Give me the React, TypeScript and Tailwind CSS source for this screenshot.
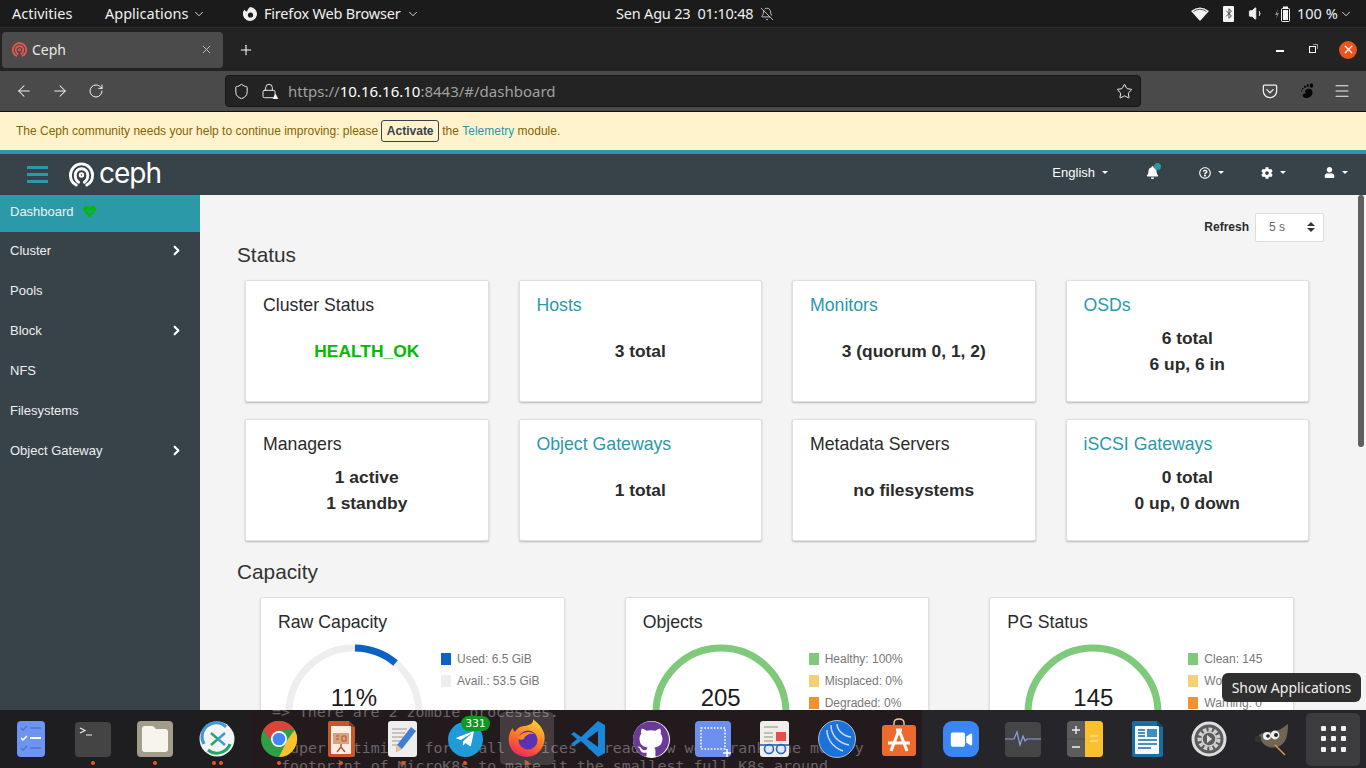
import { ReactNode } from 'react';
import { ArrowLeft, ArrowRight, BellOff, ChevronDown, ChevronRight, Lock, Plus, RotateCw, Shield, Star, Volume1, X, Menu } from 'lucide-react';
import { FaBell, FaCog, FaHeartbeat, FaRegQuestionCircle, FaTelegramPlane, FaUser, FaVideo } from 'react-icons/fa';
import { SiGithub } from 'react-icons/si';

function CephMark({ className, color }: { className: string; color: string }) {
  return (
    <svg viewBox="0 0 26 26" className={className} fill="none" stroke={color} strokeWidth="3" strokeLinecap="round">
      <path d="M7.5 24 C3.5 22 1.5 18 1.5 13.5 A11.5 11.5 0 0 1 24.5 13.5 C24.5 18 22.5 22 18.5 24" />
      <path d="M10 21 C7.5 19.5 6.5 16.5 6.5 13.5 A6.5 6.5 0 0 1 19.5 13.5 C19.5 16.5 18.5 19.5 16 21" />
      <circle cx="13" cy="13.5" r="1.8" strokeWidth="2" />
    </svg>
  );
}

function Caret() {
  return <span className="ml-[7px] h-0 w-0 border-x-[3px] border-t-[3px] border-x-transparent border-t-white" />;
}

function TopBar() {
  return (
    <div className="relative flex h-[28px] items-center whitespace-nowrap border-b border-[#2c2c2c] bg-[#1b1b1b] font-['Noto_Sans',sans-serif] text-[14.5px] text-[#f0f0f0]">
      <span className="ml-3 w-[93px]">Activities</span>
      <span className="w-[84px]">Applications</span>
      <ChevronDown className="ml-[3px] h-[14px] w-[14px]" strokeWidth={1.5} />
      <svg viewBox="0 0 16 16" className="ml-[36px] h-4 w-4" fill="#f0f0f0">
        <path d="M8 1 A7 7 0 1 1 2.5 3.6 C3 5 4 5.6 5 5.4 C5.4 3.6 6.8 2.4 8 1 Z" />
        <circle cx="8.5" cy="9" r="2.6" fill="#1b1b1b" />
      </svg>
      <span className="ml-[6px] w-[137px] tracking-[-0.2px]">Firefox Web Browser</span>
      <ChevronDown className="ml-[5px] h-[14px] w-[14px]" strokeWidth={1.5} />
      <span className="ml-[196px] w-[144px] tracking-[-0.2px]">Sen Agu 23&nbsp; 01:10:48</span>
      <BellOff className="h-[14px] w-[14px]" strokeWidth={1.3} />
      <div className="ml-auto flex items-center pr-[13px]">
        <svg viewBox="0 0 18 14" className="h-[14px] w-[18px]" fill="#f4f4f4">
          <path d="M0 4 Q9 -3 18 4 L9 14 Z" />
          <path d="M2.5 4.5 Q9 0 15.5 4.5" fill="none" stroke="#1b1b1b" strokeWidth="0.7" />
        </svg>
        <span className="ml-[14px] flex h-[16px] w-[11px] items-center justify-center rounded-[1px] bg-[#f4f4f4]">
          <svg viewBox="0 0 10 16" className="h-[13px] w-[8px]" fill="none" stroke="#222" strokeWidth="1">
            <path d="M1.5 4.5 L8 11 L5 14 V2 L8 5 L1.5 11.5" />
          </svg>
        </span>
        <Volume1 className="ml-[14px] h-[17px] w-[17px] fill-[#f0f0f0]" strokeWidth={1.3} />
        <svg viewBox="0 0 20 16" className="ml-[9px] h-[16px] w-[20px]" fill="none">
          <path d="M4 3 L1 9 H3 L2 13 L5 7 H3 Z" fill="#888" />
          <rect x="7.5" y="2.5" width="8" height="13" rx="1" stroke="#f4f4f4" />
          <rect x="9" y="0.5" width="5" height="2" fill="#f4f4f4" />
          <rect x="9" y="4" width="5" height="10" fill="#f4f4f4" />
        </svg>
        <span className="ml-[3px] w-[39px] text-[#e9f2fb]">100 %</span>
        <ChevronDown className="ml-[3px] h-[14px] w-[14px]" strokeWidth={1.5} />
      </div>
    </div>
  );
}

function TabStrip() {
  return (
    <div className="flex h-[43px] items-center bg-[#232323] pl-[2px] font-['Noto_Sans',sans-serif] text-[#e8e8e8]">
      <div className="flex h-[36px] w-[221px] items-center rounded-[4px] bg-[#4b4b4b] pl-[10px] pr-[10px]">
        <CephMark className="h-[15px] w-[15px]" color="#f0564f" />
        <span className="ml-[5px] text-[14px]">Ceph</span>
        <X className="ml-auto h-[13px] w-[13px] text-[#d0d0d0]" strokeWidth={1.5} />
      </div>
      <Plus className="ml-[15px] h-[16px] w-[16px] text-white" strokeWidth={1.6} />
      <div className="ml-auto flex items-center pr-[9px]">
        <span className="mt-[3px] h-[1.5px] w-2 bg-white" />
        <span className="relative ml-[25px] h-[7px] w-[7px] border border-white">
          <span className="absolute -right-[3px] -top-[3px] h-[5px] w-[5px] border-r border-t border-[#999]" />
        </span>
        <span className="ml-[23px] flex h-[18px] w-[18px] items-center justify-center rounded-full bg-[#e95420]">
          <X className="h-[13px] w-[13px] text-white" strokeWidth={2.2} />
        </span>
      </div>
    </div>
  );
}

function NavToolbar() {
  return (
    <div className="flex h-[41px] items-center border-b border-[#111] bg-[#4a4a4a] text-[#f2f2f2]">
      <ArrowLeft className="ml-[15px] h-[18px] w-[18px]" strokeWidth={1.4} />
      <ArrowRight className="ml-[18px] h-[18px] w-[18px]" strokeWidth={1.4} />
      <RotateCw className="ml-[19px] h-[16px] w-[16px]" strokeWidth={1.5} />
      <div className="ml-[121px] flex h-[32px] w-[916px] items-center rounded-[4px] border border-[#161616] bg-[#232323] pl-[7px] pr-[7px] font-['Noto_Sans',sans-serif] text-[15px]">
        <Shield className="h-[17px] w-[17px]" strokeWidth={1.4} />
        <span className="relative ml-[11px]">
          <Lock className="h-[16px] w-[16px]" strokeWidth={1.4} />
          <span className="absolute -bottom-[1px] -right-[3px] text-[9px] leading-none text-white">▲</span>
        </span>
        <span className="ml-[11px] text-[#a0a0a0]">
          https://<span className="text-white">10.16.16.10</span>:8443/#/dashboard
        </span>
        <Star className="ml-auto h-[17px] w-[17px]" strokeWidth={1.4} />
      </div>
      <svg viewBox="0 0 18 18" className="ml-[121px] h-4 w-4" fill="none" stroke="#f2f2f2" strokeWidth="1.4" strokeLinejoin="round" strokeLinecap="round">
        <path d="M2.5 2.5 H15.5 Q16.5 2.5 16.5 4 V9 A7.5 7.5 0 0 1 1.5 9 V4 Q1.5 2.5 2.5 2.5 Z" />
        <path d="M5.5 7.5 L9 11 L12.5 7.5" />
      </svg>
      <svg viewBox="0 0 16 16" className="ml-[20px] h-4 w-4" fill="#050505">
        <path d="M8.5 6.5 C11 5 15 6 14.5 10 C14 14 9 16 6 14.5 C3.5 13 5 9.5 8.5 10.5 C6.5 8.5 6.5 7.5 8.5 6.5 Z" />
        <ellipse cx="13.5" cy="2.5" rx="1.7" ry="2.3" />
        <ellipse cx="9.8" cy="2.5" rx="1.1" ry="1.5" />
        <ellipse cx="7" cy="3.8" rx="0.9" ry="1.2" />
        <ellipse cx="4.8" cy="5.6" rx="0.7" ry="0.9" />
        <ellipse cx="3.6" cy="7.7" rx="0.5" ry="0.7" />
      </svg>
      <Menu className="ml-[19px] h-[18px] w-[18px]" strokeWidth={1.4} />
    </div>
  );
}

function Banner() {
  return (
    <div className="flex h-[38px] items-center bg-[#fff3cd] pl-4 text-[12px] text-[#856404]">
      The Ceph community needs your help to continue improving: please
      <span className="mx-[3px] flex h-[22px] w-[58px] items-center justify-center rounded-[3px] border border-[#374249] font-bold text-[#374249]">
        Activate
      </span>
      the&nbsp;<span className="text-[#2b99a8]">Telemetry</span>&nbsp;module.
    </div>
  );
}

function CephNav() {
  return (
    <div className="flex h-[45px] items-center border-t-4 border-[#2b99a8] bg-[#374249] text-white">
      <div className="ml-[27px] flex w-[21px] flex-col gap-[4px]">
        <span className="h-[3px] bg-[#2b99a8]" />
        <span className="h-[3px] bg-[#2b99a8]" />
        <span className="h-[3px] bg-[#2b99a8]" />
      </div>
      <CephMark className="ml-[21px] h-[25px] w-[25px]" color="#ffffff" />
      <span className="ml-[5px] -mt-[3px] font-['Inter',sans-serif] text-[28px] leading-none tracking-[-1px]">ceph</span>
      <div className="ml-auto flex items-center pb-[4px] pr-[18px] text-[13px]">
        English
        <Caret />
        <span className="relative ml-[38px]">
          <FaBell className="h-[13px] w-[13px]" />
          <span className="absolute -right-[2px] -top-[3px] h-[7px] w-[7px] rounded-full bg-[#2b99a8]" />
        </span>
        <FaRegQuestionCircle className="ml-[40px] h-[12px] w-[12px]" />
        <Caret />
        <FaCog className="ml-[37px] h-[12px] w-[12px]" />
        <Caret />
        <FaUser className="ml-[38px] h-[11px] w-[11px]" />
        <Caret />
      </div>
    </div>
  );
}

function Sidebar() {
  const items = [
    { label: 'Cluster', sub: true },
    { label: 'Pools', sub: false },
    { label: 'Block', sub: true },
    { label: 'NFS', sub: false },
    { label: 'Filesystems', sub: false },
    { label: 'Object Gateway', sub: true },
  ];
  return (
    <aside className="w-[200px] shrink-0 bg-[#374249] text-[13px] text-[#f0f0f0]">
      <div className="flex h-[37px] items-center bg-[#2b99a8] pb-1 pl-[10px]">
        Dashboard
        <FaHeartbeat className="ml-[9px] h-[13px] w-[13px] text-[#00bb00]" />
      </div>
      {items.map((item) => (
        <div key={item.label} className="flex h-10 items-center pb-[3px] pl-[10px] pr-[16px]">
          {item.label}
          {item.sub && <ChevronRight className="ml-auto h-[15px] w-[15px] text-white" strokeWidth={3.4} />}
        </div>
      ))}
    </aside>
  );
}

function StatusCard({ title, link, lines, green }: { title: string; link?: boolean; lines: string[]; green?: boolean }) {
  return (
    <div className="h-[122px] rounded-[2px] border border-[#e0e0e0] bg-white px-[17px] pt-[13px] shadow-[0_1px_2px_rgba(0,0,0,0.25)]">
      <div className={`h-[22px] text-[17.7px] leading-[22px] ${link ? 'text-[#2b99a8]' : 'text-[#2b2b2b]'}`}>{title}</div>
      <div className={`mt-[9px] flex h-[52px] flex-col items-center justify-center text-[17.4px] font-bold leading-[26px] ${green ? 'text-[#00bb00]' : 'text-[#2b2b2b]'}`}>
        {lines.map((line) => (
          <div key={line}>{line}</div>
        ))}
      </div>
    </div>
  );
}

function CapacityCard(props: {
  title: string;
  center: string;
  donutLeft: number;
  legendGap: number;
  ringColor: string;
  arc?: boolean;
  legend: { label: string; color: string }[];
}) {
  const { title, center, donutLeft, legendGap, ringColor, arc, legend } = props;
  return (
    <div className="h-[200px] rounded-[2px] border border-[#e0e0e0] bg-white pl-[17px] pt-[13px] shadow-[0_1px_2px_rgba(0,0,0,0.2)]">
      <div className="h-[22px] text-[17.7px] leading-[22px] text-[#2b2b2b]">{title}</div>
      <div className="mt-[11px] flex">
        <div className="relative h-[138px] w-[138px] shrink-0" style={{ marginLeft: donutLeft }}>
          <svg viewBox="0 0 138 138" className="h-[138px] w-[138px]" fill="none">
            <circle cx="69" cy="69" r="65" stroke={ringColor} strokeWidth="7" />
            {arc && <path d="M70 4 A65 65 0 0 1 110.5 19" stroke="#0b62c4" strokeWidth="7" />}
          </svg>
          <div className="absolute inset-x-0 top-[40px] text-center text-[24px] leading-[28px] text-[#1c1c1c]">{center}</div>
        </div>
        <div className="flex flex-col gap-[10px] pt-[9px] text-[12px] leading-[12px] text-[#777]" style={{ marginLeft: legendGap }}>
          {legend.map((entry) => (
            <div key={entry.label} className="flex items-center">
              <span className="mr-[6px] h-[12px] w-[10px]" style={{ backgroundColor: entry.color }} />
              {entry.label}
            </div>
          ))}
        </div>
      </div>
    </div>
  );
}

function Dashboard() {
  return (
    <main className="relative min-w-0 flex-1 overflow-hidden bg-[#f4f4f4] font-['Liberation_Sans',sans-serif]">
      <div className="flex h-[47px] items-start justify-end pr-[42px] pt-[18px]">
        <span className="mr-[6px] mt-[5px] text-[12px] font-bold text-[#2b2b2b]">Refresh</span>
        <div className="flex h-[29px] w-[69px] items-center justify-between rounded-[2px] border border-[#ddd] bg-white pb-[2px] pl-[13px] pr-[8px] text-[12px] text-[#666]">
          5 s
          <span className="flex flex-col gap-[2px]">
            <span className="h-0 w-0 border-x-[4px] border-b-[4px] border-x-transparent border-b-[#333]" />
            <span className="h-0 w-0 border-x-[4px] border-t-[4px] border-x-transparent border-t-[#333]" />
          </span>
        </div>
      </div>
      <h2 className="ml-[37px] mt-[1px] text-[20.8px] leading-[24px] text-[#333]">Status</h2>
      <div className="ml-[45px] mt-[13px] grid w-[1064px] grid-cols-4 gap-x-[30px] gap-y-[17px]">
        <StatusCard title="Cluster Status" lines={['HEALTH_OK']} green />
        <StatusCard title="Hosts" link lines={['3 total']} />
        <StatusCard title="Monitors" link lines={['3 (quorum 0, 1, 2)']} />
        <StatusCard title="OSDs" link lines={['6 total', '6 up, 6 in']} />
        <StatusCard title="Managers" lines={['1 active', '1 standby']} />
        <StatusCard title="Object Gateways" link lines={['1 total']} />
        <StatusCard title="Metadata Servers" lines={['no filesystems']} />
        <StatusCard title="iSCSI Gateways" link lines={['0 total', '0 up, 0 down']} />
      </div>
      <h2 className="ml-[37px] mt-[19px] text-[20.8px] leading-[24px] text-[#333]">Capacity</h2>
      <div className="ml-[60px] mt-[13px] grid w-[1034px] grid-cols-3 gap-x-[60px]">
        <CapacityCard
          title="Raw Capacity"
          center="11%"
          donutLeft={7}
          legendGap={18}
          ringColor="#eeeeee"
          arc
          legend={[
            { label: 'Used: 6.5 GiB', color: '#0b62c4' },
            { label: 'Avail.: 53.5 GiB', color: '#eeeeee' },
          ]}
        />
        <CapacityCard
          title="Objects"
          center="205"
          donutLeft={9}
          legendGap={19}
          ringColor="#7ec97a"
          legend={[
            { label: 'Healthy: 100%', color: '#7ec97a' },
            { label: 'Misplaced: 0%', color: '#f6d173' },
            { label: 'Degraded: 0%', color: '#f0932f' },
          ]}
        />
        <CapacityCard
          title="PG Status"
          center="145"
          donutLeft={17}
          legendGap={26}
          ringColor="#7ec97a"
          legend={[
            { label: 'Clean: 145', color: '#7ec97a' },
            { label: 'Working: 0', color: '#f6d173' },
            { label: 'Warning: 0', color: '#f0932f' },
          ]}
        />
      </div>
      <div className="absolute right-[2px] top-0 h-[252px] w-[6px] rounded-full bg-[#5f5f5f]" />
    </main>
  );
}

/* dock icons, all on a 48 box */
const Tile = ({ children }: { children: ReactNode }) => (
  <svg viewBox="0 0 48 48" className="h-12 w-12">
    {children}
  </svg>
);

const dockIcons: { key: string; dots?: number; active?: boolean; icon: ReactNode }[] = [
  {
    key: 'tasks',
    icon: (
      <Tile>
        <rect x="10" y="6" width="28" height="36" rx="4" fill="#6d94f0" />
        <path d="M14 13 l2 2 l4 -4 M14 33 l2 2 l4 -4" stroke="#4f74d0" strokeWidth="1.5" fill="none" />
        <path d="M14 23 l2 2 l4 -4" stroke="#fff" strokeWidth="1.5" fill="none" />
        <path d="M23 13 h11 M23 33 h11" stroke="#4f74d0" strokeWidth="1.5" />
        <path d="M23 23 h11" stroke="#fff" strokeWidth="2" />
      </Tile>
    ),
  },
  {
    key: 'terminal',
    dots: 1,
    icon: (
      <Tile>
        <rect x="6" y="7" width="36" height="35" rx="4" fill="#444444" />
        <path d="M11 13 l5 2.5 l-5 2.5 M17 20 h6" stroke="#eee" strokeWidth="1.2" fill="none" />
      </Tile>
    ),
  },
  {
    key: 'files',
    dots: 1,
    icon: (
      <Tile>
        <rect x="6" y="6" width="36" height="36" rx="4" fill="#a39c8b" />
        <path d="M11 14 q0 -3 3 -3 h8 l3 3 h9 q3 0 3 3 v17 q0 3 -3 3 h-20 q-3 0 -3 -3 Z" fill="#f7f4ee" />
      </Tile>
    ),
  },
  {
    key: 'remmina',
    dots: 2,
    icon: (
      <Tile>
        <circle cx="24" cy="24" r="17.5" fill="#f4f4f4" />
        <path d="M33 12 A14 14 0 0 0 11 29" stroke="#3d97dd" strokeWidth="3" fill="none" />
        <path d="M15 35 A14 14 0 0 0 37 29" stroke="#1fa866" strokeWidth="3" fill="none" />
        <path d="M18 18 l7 6 l-7 6" stroke="#1fa866" strokeWidth="2.4" fill="none" />
        <path d="M32 18 l-7 6 l7 6" stroke="#3d97dd" strokeWidth="2.4" fill="none" />
      </Tile>
    ),
  },
  {
    key: 'chrome',
    dots: 1,
    icon: (
      <Tile>
        <circle cx="24" cy="24" r="18" fill="#2f9e44" />
        <path d="M39.6 15 A18 18 0 0 1 24 42 L33 24 Z" fill="#fbc02d" />
        <path d="M8.4 15 A18 18 0 0 1 39.6 15 H24 L15 24 Z" fill="#db4437" />
        <circle cx="24" cy="24" r="8" fill="#fff" />
        <circle cx="24" cy="24" r="6.3" fill="#4285f4" />
      </Tile>
    ),
  },
  {
    key: 'impress',
    dots: 1,
    icon: (
      <Tile>
        <path d="M11 8 q0 -2 2 -2 h19 l6 6 v28 q0 2 -2 2 h-23 q-2 0 -2 -2 Z" fill="#c8572a" />
        <path d="M32 6 l6 6 h-6 Z" fill="#8f3d1c" />
        <rect x="14" y="11" width="20" height="28" rx="1" fill="#fbeee6" />
        <rect x="16" y="18" width="16" height="11" fill="#dda07e" />
        <path d="M19 21 h3 M19 24 h3 M25 21 h4 v5 h-4 Z" stroke="#b5552b" strokeWidth="1" fill="none" />
        <path d="M24 29 v3 M24 32 l-4 5 M24 32 l4 5" stroke="#b5552b" strokeWidth="1.5" />
      </Tile>
    ),
  },
  {
    key: 'editor',
    dots: 1,
    icon: (
      <Tile>
        <rect x="9" y="6" width="29" height="36" rx="3" fill="#eeeeee" />
        <path d="M13 14 h15 M13 18 h13 M13 22 h11 M13 26 h9 M13 30 h7" stroke="#b9b5a9" strokeWidth="1.4" />
        <path d="M32 12 l5 4 l-14 18 l-6 3 l1 -7 Z" fill="#3f7fd8" />
        <path d="M18 30 l5 4 l-6 3 Z" fill="#f0c48a" />
      </Tile>
    ),
  },
  {
    key: 'telegram',
    dots: 1,
    icon: (
      <div className="flex h-[35px] w-[35px] items-center justify-center rounded-full bg-[#1f9bd8]">
        <FaTelegramPlane className="h-[20px] w-[20px] text-white" />
      </div>
    ),
  },
  {
    key: 'firefox',
    dots: 1,
    active: true,
    icon: (
      <svg viewBox="0 0 48 48" className="h-12 w-12">
        <defs>
          <linearGradient id="fx" x1="0.7" y1="0" x2="0.3" y2="1">
            <stop offset="0" stopColor="#ffd23a" />
            <stop offset="0.5" stopColor="#ff7a1f" />
            <stop offset="1" stopColor="#f0245f" />
          </linearGradient>
        </defs>
        <path d="M30 4 C34 8 38 10 41 18 C44 30 36 42 24 42 C12 42 4 33 6 21 C7 17 8 15 10 13 C10 15 11 16 12 17 C14 13 18 11 22 11 C26 10 31 9 30 4 Z" fill="url(#fx)" />
        <circle cx="25" cy="25" r="9.5" fill="#5a32b8" />
        <path d="M15 23 C18 17 27 15 32 19 C27 18 22 20 21 24 C18 25 16 25 15 23 Z" fill="#ff8a24" />
      </svg>
    ),
  },
  {
    key: 'vscode',
    icon: (
      <Tile>
        <path fillRule="evenodd" d="M33 6 L16 22 L9 17 L6 19 L12 24 L6 29 L9 31 L16 26 L33 42 L40 38 V10 Z M33 16 V32 L22 24 Z" fill="#1a87d8" />
      </Tile>
    ),
  },
  {
    key: 'github',
    icon: (
      <div className="flex h-[37px] w-[37px] items-center justify-center rounded-full bg-white">
        <SiGithub className="h-[36px] w-[36px] text-[#6a3a94]" />
      </div>
    ),
  },
  {
    key: 'shot',
    icon: (
      <Tile>
        <rect x="6" y="6" width="36" height="36" rx="4" fill="#6d8ff0" />
        <rect x="12" y="13" width="24" height="21" fill="none" stroke="#fff" strokeWidth="1.6" strokeDasharray="1.6 1.6" />
        <path d="M38 34 v8 M34 38 h8" stroke="#fff" strokeWidth="1.6" />
      </Tile>
    ),
  },
  {
    key: 'reader',
    icon: (
      <Tile>
        <rect x="9" y="6" width="29" height="36" rx="3" fill="#efeeea" />
        <path d="M13 12 h14 M13 18 h9 M13 22 h9 M13 26 h9" stroke="#b4ad98" strokeWidth="1.6" />
        <rect x="25" y="17" width="10" height="9" fill="#e2504c" />
        <circle cx="18" cy="34" r="4.5" fill="#dfe8f5" stroke="#2a63b8" strokeWidth="1.6" />
        <circle cx="30" cy="34" r="4.5" fill="#dfe8f5" stroke="#2a63b8" strokeWidth="1.6" />
        <path d="M9 30 h29" stroke="#2a63b8" strokeWidth="1.6" />
      </Tile>
    ),
  },
  {
    key: 'winbox',
    icon: (
      <Tile>
        <circle cx="24" cy="24" r="18.5" fill="#1a72dc" stroke="#d8d8d8" strokeWidth="0.8" />
        <path d="M18 10 C18 20 25 28 36 30 M24 9 C24 15 30 21 38 22 M14 15 C14 25 21 33 30 36" stroke="#cfd8e6" strokeWidth="1.5" fill="none" />
      </Tile>
    ),
  },
  {
    key: 'store',
    icon: (
      <Tile>
        <path d="M19 11 V8 q0 -4 5 -4 q5 0 5 4 v3" stroke="#e8c98e" strokeWidth="1.5" fill="none" />
        <rect x="7" y="10" width="34" height="31" rx="3" fill="#ee6a2c" />
        <path d="M24 15 L16 36 M24 15 L32 36 M13 28 H35" stroke="#fff" strokeWidth="3" />
        <path d="M21 15 h6" stroke="#fff" strokeWidth="3" />
      </Tile>
    ),
  },
  {
    key: 'zoom',
    icon: (
      <div className="flex h-[36px] w-[36px] items-center justify-center rounded-[9px] bg-[#3a86f5]">
        <FaVideo className="h-[19px] w-[23px] text-white" />
      </div>
    ),
  },
  {
    key: 'monitor',
    icon: (
      <Tile>
        <rect x="6" y="7" width="36" height="35" rx="4" fill="#454545" />
        <path d="M6 24 h9 l3 -7 l3 13 l3 -9 l2 5 l2 -2 h14" stroke="#8d9fe6" strokeWidth="1.2" fill="none" />
      </Tile>
    ),
  },
  {
    key: 'calc',
    icon: (
      <Tile>
        <rect x="6" y="6" width="36" height="36" rx="4" fill="#5c5c5c" />
        <path d="M24 6 h14 q4 0 4 4 v28 q0 4 -4 4 h-14 Z" fill="#fbc02d" />
        <path d="M6 24 h18" stroke="#444" strokeWidth="0.8" />
        <path d="M11 15 h8 M15 11 v8 M11 32 h8" stroke="#eee" strokeWidth="1.4" />
        <path d="M29 21 h8 M29 26 h8" stroke="#fbe28c" strokeWidth="1.6" />
      </Tile>
    ),
  },
  {
    key: 'writer',
    icon: (
      <Tile>
        <path d="M9 8 q0 -2 2 -2 h23 l6 6 v28 q0 2 -2 2 h-27 q-2 0 -2 -2 Z" fill="#1a6ea3" />
        <path d="M34 6 l6 6 h-6 Z" fill="#0e4a70" />
        <rect x="12" y="11" width="24" height="28" rx="1" fill="#f3f8fb" />
        <rect x="24" y="14" width="10" height="8" fill="#3e8ec4" />
        <path d="M15 15 h7 M15 18 h7 M15 21 h7 M15 25 h19 M15 29 h19 M15 33 h13" stroke="#1a6ea3" strokeWidth="1.5" />
      </Tile>
    ),
  },
  {
    key: 'settings',
    icon: (
      <Tile>
        <circle cx="24" cy="24" r="16" fill="#5c5c5c" stroke="#dedede" strokeWidth="3" />
        <circle cx="24" cy="24" r="9.5" fill="none" stroke="#d0d0d0" strokeWidth="4" strokeDasharray="3.5 2" />
        <circle cx="24" cy="24" r="7" fill="none" stroke="#d0d0d0" strokeWidth="1.6" />
        <path d="M22 20 l5 4 l-5 4 Z" fill="#e0e0e0" />
      </Tile>
    ),
  },
  {
    key: 'gimp',
    icon: (
      <Tile>
        <path d="M12 20 C18 16 26 18 34 14 L41 9 C41 20 39 30 30 32 C22 34 14 30 12 20 Z" fill="#6f6656" />
        <circle cx="20" cy="21" r="4" fill="#eee" />
        <circle cx="28" cy="20" r="4.4" fill="#eee" />
        <circle cx="21" cy="21" r="1.8" fill="#222" />
        <circle cx="29" cy="20" r="2" fill="#222" />
        <circle cx="11" cy="24" r="3.2" fill="#333" />
        <path d="M28 30 L38 40" stroke="#d8994a" strokeWidth="1.5" />
        <path d="M38 40 l2 2" stroke="#222" strokeWidth="1.5" />
      </Tile>
    ),
  },
];

function Dock() {
  return (
    <div className="absolute inset-x-0 bottom-0 h-[58px] overflow-hidden bg-[#26262a]">
      <div className="absolute inset-y-0 left-0 w-[250px] bg-[#1e1e21]" />
      <div className="absolute inset-y-0 left-[250px] w-[672px] overflow-hidden whitespace-pre bg-[#231a1e] pl-[22px] font-['DejaVu_Sans_Mono',monospace] text-[14.9px] leading-[18px] text-[#6b6468]">
        <div className="-mt-[7px]">=&gt; There are 2 zombie processes.</div>
        <div className="h-[18px]" />
        <div className="pl-[9px]">Super-optimized for small devices - read how we shrank the memory</div>
        <div className="pl-[9px]">footprint of MicroK8s to make it the smallest full K8s around</div>
      </div>
      <div className="relative flex h-full">
        {dockIcons.map((item) => (
          <div key={item.key} className="relative flex h-full w-[62px] shrink-0 items-center justify-center">
            {item.active && <div className="absolute left-[4px] top-[2px] h-[53px] w-[54px] rounded-[5px] bg-white/15" />}
            <div className="relative flex h-[48px] w-[48px] items-center justify-center">{item.icon}</div>
            {item.key === 'telegram' && (
              <span className="absolute left-[27px] top-[6px] flex h-[15px] w-[29px] items-center justify-center rounded-full bg-[#0d9a23] font-['DejaVu_Sans_Mono',monospace] text-[11px] leading-none text-white">
                331
              </span>
            )}
            {item.dots && (
              <div className="absolute bottom-[3px] flex gap-[3px]">
                {Array.from({ length: item.dots }).map((_, i) => (
                  <span key={i} className="h-[4px] w-[4px] rounded-full bg-[#e95420]" />
                ))}
              </div>
            )}
          </div>
        ))}
        <div className="relative flex h-full w-[62px] shrink-0 items-center justify-center">
          <div className="grid h-[53px] w-[54px] grid-cols-3 place-items-center rounded-[5px] bg-white/10 px-[12px] py-[11px]">
            {Array.from({ length: 9 }).map((_, i) => (
              <span key={i} className="h-[5px] w-[5px] rounded-[1px] bg-[#f0f0f0]" />
            ))}
          </div>
        </div>
      </div>
    </div>
  );
}

export default function App() {
  return (
    <div className="relative flex h-[768px] w-[1366px] flex-col overflow-hidden font-['Liberation_Sans',sans-serif]">
      <TopBar />
      <TabStrip />
      <NavToolbar />
      <Banner />
      <CephNav />
      <div className="flex min-h-0 flex-1">
        <Sidebar />
        <Dashboard />
      </div>
      <Dock />
      <div className="absolute left-[1222px] top-[673px] flex h-[29px] w-[139px] items-center justify-center rounded-[6px] bg-[#2f2f2f] font-['Noto_Sans',sans-serif] text-[14px] text-[#f2f2f2]">
        Show Applications
      </div>
    </div>
  );
}
